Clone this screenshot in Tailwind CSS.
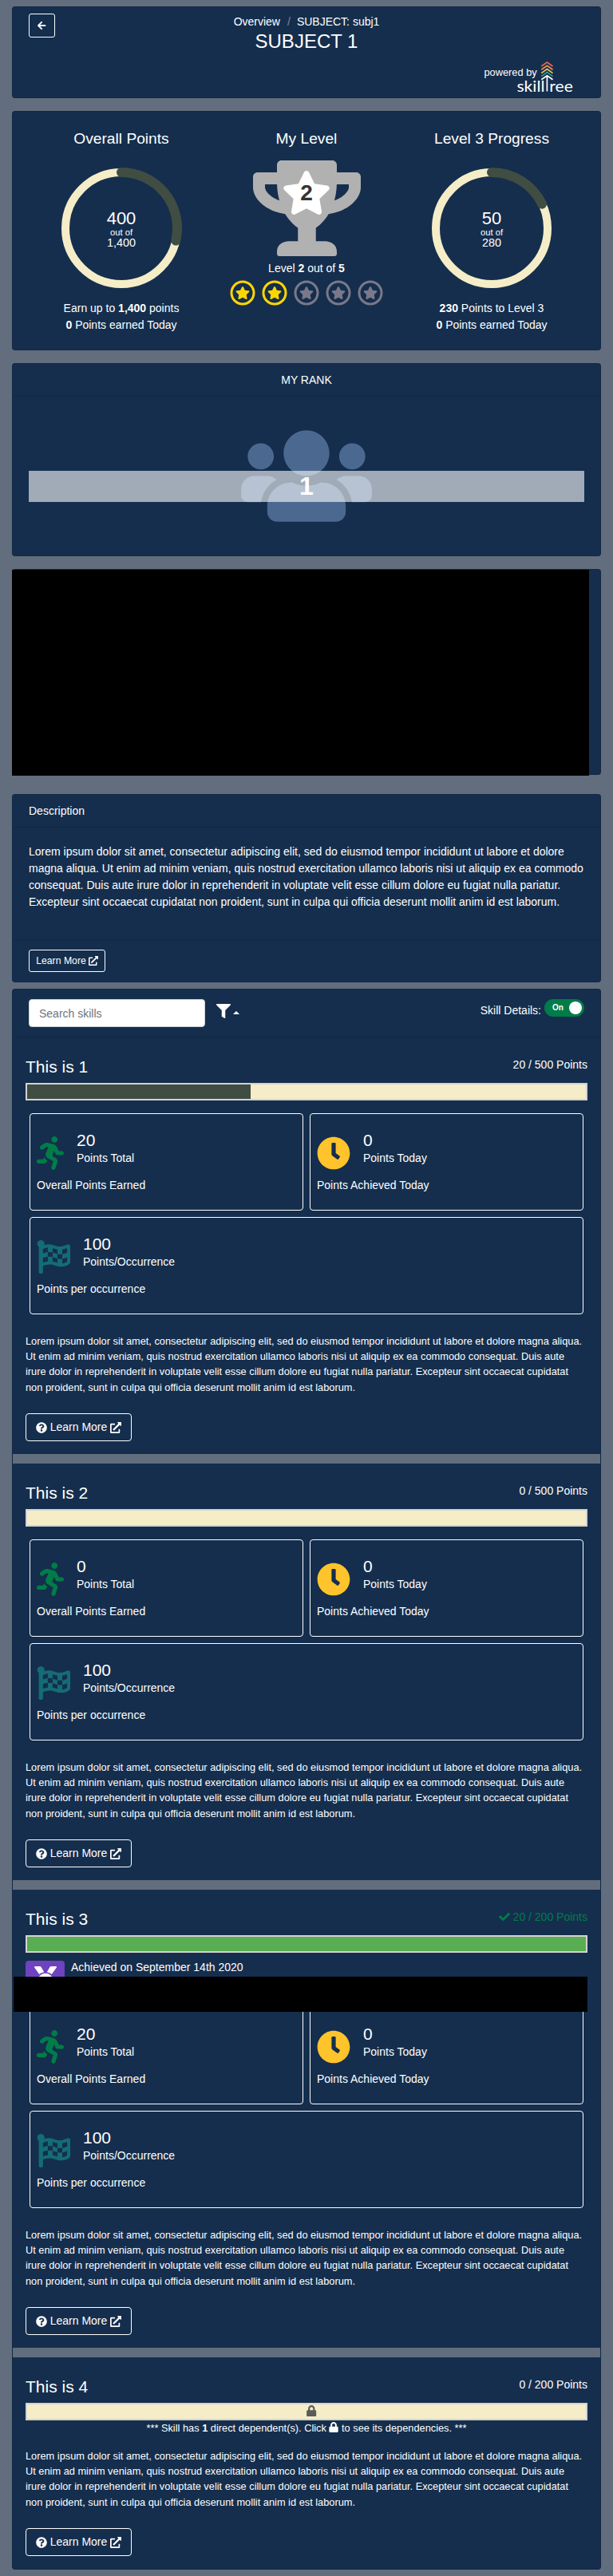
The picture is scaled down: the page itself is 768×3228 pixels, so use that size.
<!DOCTYPE html>
<html lang="en">
<head>
<meta charset="utf-8">
<title>SUBJECT 1</title>
<script src="https://cdn.jsdelivr.net/npm/@tailwindcss/browser@4"></script>
</head>
<body class="bg-[#626d7d] text-white text-[14px] leading-[21px] font-['Liberation_Sans',Arial,sans-serif]">
<svg class="hidden" xmlns="http://www.w3.org/2000/svg">
  <symbol id="arrow" viewBox="0 0 448 512"><path d="M257.5 445.1l-22.2 22.2c-9.4 9.4-24.6 9.4-33.9 0L7 273c-9.4-9.4-9.4-24.6 0-33.9L201.4 44.7c9.4-9.4 24.6-9.4 33.9 0l22.2 22.2c9.5 9.5 9.3 25-.4 34.3L136.6 216H424c13.3 0 24 10.7 24 24v32c0 13.3-10.7 24-24 24H136.6l120.5 114.8c9.8 9.3 10 24.8.4 34.3z"/></symbol>
  <symbol id="trophy" viewBox="0 0 576 512"><path d="M552 64H448V24c0-13.3-10.7-24-24-24H152c-13.3 0-24 10.7-24 24v40H24C10.7 64 0 74.7 0 88v56c0 35.7 22.5 72.4 61.9 100.7 31.5 22.7 69.8 37.1 110 41.7C203.3 338.5 240 360 240 360v72h-48c-35.3 0-64 20.7-64 56v12c0 6.6 5.4 12 12 12h296c6.6 0 12-5.4 12-12v-12c0-35.3-28.7-56-64-56h-48v-72s36.7-21.5 68.1-73.6c40.3-4.6 78.6-19 110-41.7 39.3-28.3 61.9-65 61.9-100.7V88c0-13.3-10.7-24-24-24zM99.3 192.8C74.9 175.2 64 155.6 64 144v-16h64.2c1 32.6 5.8 61.2 12.8 86.2-15.1-5.2-29.2-12.4-41.7-21.4zM512 144c0 16.1-17.7 36.1-35.3 48.8-12.5 9-26.7 16.2-41.8 21.4 7-25 11.8-53.6 12.8-86.2H512v16z"/></symbol>
  <symbol id="star" viewBox="0 0 576 512"><path d="M259.3 17.8L194 150.2 47.9 171.5c-26.2 3.8-36.7 36.1-17.7 54.6l105.7 103-25 145.5c-4.5 26.3 23.2 46 46.4 33.7L288 439.6l130.7 68.7c23.2 12.2 50.9-7.4 46.4-33.7l-25-145.5 105.7-103c19-18.5 8.5-50.8-17.7-54.6L382 150.2 316.7 17.8c-11.7-23.6-45.6-23.9-57.4 0z"/></symbol>
  <symbol id="badge" viewBox="0 0 32 32"><circle cx="16" cy="16" r="14" fill="none" stroke="currentColor" stroke-width="3"/><use href="#star" x="7" y="8" width="18" height="16"/></symbol>
  <symbol id="users" viewBox="0 0 640 512"><path d="M96 224c35.3 0 64-28.7 64-64s-28.7-64-64-64-64 28.7-64 64 28.7 64 64 64zm448 0c35.3 0 64-28.7 64-64s-28.7-64-64-64-64 28.7-64 64 28.7 64 64 64zm32 32h-64c-17.6 0-33.5 7.1-45.1 18.6 40.3 22.1 68.9 62 75.1 109.4h66c17.7 0 32-14.3 32-32v-32c0-35.3-28.7-64-64-64zm-256 0c61.9 0 112-50.1 112-112S381.9 32 320 32 208 82.1 208 144s50.1 112 112 112zm76.8 32h-8.3c-20.8 10-43.9 16-68.5 16s-47.6-6-68.5-16h-8.3C179.6 288 128 339.6 128 403.2V432c0 26.5 21.5 48 48 48h288c26.5 0 48-21.5 48-48v-28.8c0-63.6-51.6-115.2-115.2-115.2zm-223.7-13.4C161.5 263.1 145.6 256 128 256H64c-35.3 0-64 28.7-64 64v32c0 17.7 14.3 32 32 32h65.9c6.3-47.4 34.9-87.3 75.2-109.4z"/></symbol>
  <symbol id="link" viewBox="0 0 512 512"><path d="M432,320H400a16,16,0,0,0-16,16V448H64V128H208a16,16,0,0,0,16-16V80a16,16,0,0,0-16-16H48A48,48,0,0,0,0,112V464a48,48,0,0,0,48,48H400a48,48,0,0,0,48-48V336A16,16,0,0,0,432,320ZM488,0h-128c-21.37,0-32.05,25.91-17,41l35.73,35.73L135,320.37a24,24,0,0,0,0,34L157.67,377a24,24,0,0,0,34,0L435.28,133.32,471,169c15,15,41,4.5,41-17V24A24,24,0,0,0,488,0Z"/></symbol>
  <symbol id="question" viewBox="0 0 512 512"><path d="M504 256c0 136.997-111.043 248-248 248S8 392.997 8 256C8 119.083 119.043 8 256 8s248 111.083 248 248zM262.655 90c-54.497 0-89.255 22.957-116.549 63.758-3.536 5.286-2.353 12.415 2.715 16.258l34.699 26.31c5.205 3.947 12.621 3.008 16.665-2.122 17.864-22.658 30.113-35.797 57.303-35.797 20.429 0 45.698 13.148 45.698 32.958 0 14.976-12.363 22.667-32.534 33.976C247.128 238.528 216 254.941 216 296v4c0 6.627 5.373 12 12 12h56c6.627 0 12-5.373 12-12v-1.333c0-28.462 83.186-29.647 83.186-106.667 0-58.002-60.165-102-116.531-102zM256 338c-25.365 0-46 20.635-46 46 0 25.364 20.635 46 46 46s46-20.636 46-46c0-25.365-20.635-46-46-46z"/></symbol>
  <symbol id="filter" viewBox="0 0 512 512"><path d="M487.976 0H24.028C2.71 0-8.047 25.866 7.058 40.971L192 225.941V432c0 7.831 3.821 15.17 10.237 19.662l80 55.98C298.02 518.69 320 507.493 320 487.98V225.941l184.947-184.97C520.021 25.896 509.338 0 487.976 0z"/></symbol>
  <symbol id="run" viewBox="0 0 416 512"><path d="M272 96c26.51 0 48-21.49 48-48S298.51 0 272 0s-48 21.49-48 48 21.49 48 48 48zM113.69 317.47l-14.8 34.52H32c-17.67 0-32 14.33-32 32s14.33 32 32 32h77.45c19.25 0 36.58-11.44 44.11-29.09l8.79-20.52-10.67-6.3c-17.32-10.23-30.06-25.37-37.99-42.61zM384 223.99h-44.03l-26.06-53.25c-12.5-25.55-35.45-44.23-61.78-50.94l-71.08-21.14c-28.3-6.8-57.77-.55-80.84 17.14l-39.67 30.41c-14.03 10.75-16.69 30.83-5.94 44.86s30.84 16.69 44.86 5.94l39.69-30.41c7.67-5.89 17.44-8 25.27-6.14l14.7 4.37-37.46 87.39c-12.62 29.48-1.31 64.01 26.3 80.31l84.98 50.17-27.47 87.73c-5.28 16.86 4.11 34.82 20.97 40.09 3.19 1 6.41 1.48 9.58 1.48 13.61 0 26.23-8.77 30.52-22.45l31.64-101.06c5.91-20.77-2.89-43.08-21.64-54.39l-61.24-36.14 31.31-78.28 20.27 41.43c8 16.34 24.92 26.89 43.11 26.89H384c17.67 0 32-14.33 32-32s-14.33-31.99-32-31.99z"/></symbol>
  <symbol id="clock" viewBox="0 0 512 512"><path d="M256,8C119,8,8,119,8,256S119,504,256,504,504,393,504,256,393,8,256,8Zm92.49,313h0l-20,25a16,16,0,0,1-22.49,2.5h0l-67-49.72a40,40,0,0,1-15-31.23V112a16,16,0,0,1,16-16h32a16,16,0,0,1,16,16V256l58,42.5A16,16,0,0,1,348.49,321Z"/></symbol>
  <symbol id="flag" viewBox="0 0 512 512"><path d="M243.2 189.9V258c26.1 5.9 49.3 15.6 73.6 22.3v-68.2c-26-5.8-49.4-15.5-73.6-22.2zm223.3-123c-34.3 15.9-76.5 31.9-117 31.9C296 98.8 251.7 64 184.3 64c-25 0-47.3 4.4-68 12 2.8-7.3 4.1-15.2 3.6-23.6C118.1 24 94.8 1.2 66.3 0 34.3-1.3 8 24.3 8 56c0 19 9.5 35.8 24 45.9V488c0 13.3 10.7 24 24 24h16c13.3 0 24-10.7 24-24v-94.4c28.3-12.1 63.6-22.1 114.4-22.1 53.6 0 97.8 34.8 165.2 34.8 48.2 0 86.7-16.3 122.5-40.9 8.7-6 13.8-15.8 13.8-26.4V95.9c.1-23.3-24.2-38.8-45.4-29zM169.6 325.5c-25.8 2.7-50 8.2-73.6 16.6v-70.5c26.2-9.3 47.5-15 73.6-17.4v71.3zM464 191c-23.6 9.8-46.3 19.5-73.6 23.9V286c24.8-3.4 51.4-11.8 73.6-26v70.5c-25.1 16.1-48.5 24.7-73.6 27.1V286c-27 3.7-47.9 1.5-73.6-5.6v67.4c-23.9-7.4-47.3-16.7-73.6-21.3V258c-19.7-4.4-40.8-6.8-73.6-3.8v-70c-22.4 3.1-44.6 10.2-73.6 20.9v-70.5c33.2-12.2 50.1-19.8 73.6-22v71.6c27-3.7 48.4-1.3 73.6 5.7v-67.4c23.7 7.4 47.2 16.7 73.6 21.3v68.4c23.7 5.3 47.6 6.9 73.6 2.7V143c27-4.8 52.3-13.6 73.6-22.5z"/></symbol>
  <symbol id="check" viewBox="0 0 512 512"><path d="M173.898 439.404l-166.4-166.4c-9.997-9.997-9.997-26.206 0-36.204l36.203-36.204c9.997-9.998 26.207-9.998 36.204 0L192 312.69 432.095 72.596c9.997-9.997 26.207-9.997 36.204 0l36.203 36.204c9.997 9.997 9.997 26.206 0 36.204l-294.4 294.401c-9.998 9.997-26.207 9.997-36.204-.001z"/></symbol>
  <symbol id="medal" viewBox="0 0 512 512"><path d="M223.75 130.75L154.62 15.54A31.997 31.997 0 0 0 127.18 0H16.03C3.08 0-4.5 14.57 2.92 25.18l111.27 158.96c29.72-27.77 67.52-46.83 109.56-53.39zM495.97 0H384.82c-11.24 0-21.66 5.9-27.44 15.54l-69.13 115.21c42.04 6.56 79.84 25.62 109.56 53.38L509.08 25.18C516.5 14.57 508.92 0 495.97 0zM256 160c-97.2 0-176 78.8-176 176s78.8 176 176 176 176-78.8 176-176-78.8-176-176-176z"/></symbol>
  <symbol id="lock" viewBox="0 0 448 512"><path d="M400 224h-24v-72C376 68.2 307.8 0 224 0S72 68.2 72 152v72H48c-26.5 0-48 21.5-48 48v192c0 26.5 21.5 48 48 48h352c26.5 0 48-21.5 48-48V272c0-26.5-21.5-48-48-48zm-104 0H152v-72c0-39.7 32.3-72 72-72s72 32.3 72 72v72z"/></symbol>
</svg>

<main class="flex flex-col px-[15px] pt-2 pb-2">
  <!-- Title bar -->
  <header class="h-[115px] rounded border border-black/[.125] bg-[#152e4d] px-5 pt-2">
    <div class="grid grid-cols-[33px_1fr_33px]">
      <button class="flex h-[30px] items-center justify-center rounded-[3px] border border-white"><svg class="h-3 w-[10.5px] fill-white"><use href="#arrow"/></svg></button>
      <div class="text-center">
        <div class="flex h-5 justify-center gap-[8px] leading-5"><span>Overview</span><span class="pl-[1px] text-[#7d8894]">/</span><span>SUBJECT: subj1</span></div>
        <h1 class="text-[24px] leading-[29px]">SUBJECT 1</h1>
      </div>
    </div>
    <div class="mt-[9px] flex justify-end pr-[14px]">
      <svg class="overflow-visible" width="112" height="46" viewBox="606 75 112 46" fill="none" stroke-width="1.7">
        <text x="606.5" y="95" font-size="12.8" fill="#fff">powered by</text>
        <path d="M678.3 83 685.4 78 692.5 83" stroke="#e8674b"/>
        <path d="M678.3 87.3 685.4 82.3 692.5 87.3" stroke="#f0924f"/>
        <path d="M678.3 91.6 685.4 86.6 692.5 91.6" stroke="#edc55c"/>
        <path d="M678.3 95.6 685.4 90.6 692.5 95.6" stroke="#2b9d8f"/>
        <path d="M678.3 99.8 685.4 94.8 692.5 99.8M685.4 95V114.6" stroke="#fff"/>
        <text x="647.4" y="114.6" font-size="18.5" textLength="35" lengthAdjust="spacingAndGlyphs" fill="#fff" font-family="Lato, sans-serif">skill</text>
        <text x="688.3" y="114.6" font-size="18.5" textLength="29.5" lengthAdjust="spacingAndGlyphs" fill="#fff" font-family="Lato, sans-serif">ree</text>
      </svg>
    </div>
  </header>

  <!-- Points and level summary -->
  <section class="mt-4 grid h-[300px] grid-cols-3 rounded border border-black/[.125] bg-[#152e4d] px-5 pt-[22px] text-center">
    <div>
      <h2 class="text-[19.2px] leading-6">Overall Points</h2>
      <div class="mt-6 grid h-[152px] place-items-center">
        <svg class="col-start-1 row-start-1" width="152" height="152" fill="none"><circle cx="76" cy="76" r="70" stroke="#f5edc8" stroke-width="10"/><path d="M76 6A70 70 0 0 1 144.24 91.58" stroke="#3f4d43" stroke-width="12" stroke-linecap="round"/></svg>
        <div class="col-start-1 row-start-1 pt-px"><div class="text-[22px] leading-[22px]">400</div><div class="text-[11.2px] leading-[12px]">out of</div><div class="text-[14.4px] leading-[14px]">1,400</div></div>
      </div>
      <div class="mt-[14px]">Earn up to <b>1,400</b> points</div>
      <div><b>0</b> Points earned Today</div>
    </div>
    <div>
      <h2 class="text-[19.2px] leading-6">My Level</h2>
      <div class="mt-[15px] grid h-[120px] justify-items-center">
        <svg class="col-start-1 row-start-1 h-[120px] w-[135px] fill-[#b1b1b1]"><use href="#trophy"/></svg>
        <svg class="col-start-1 row-start-1 mt-[13px] h-[55px] w-[62px] fill-white"><use href="#star"/></svg>
        <b class="col-start-1 row-start-1 mt-[25px] text-[28px] leading-8 text-[#333]">2</b>
      </div>
      <div class="mt-[5px]">Level <b>2</b> out of <b>5</b></div>
      <div class="mt-1 flex justify-center gap-2 fill-current text-[#7b7889]">
        <svg class="size-8 text-[#ffd700]"><use href="#badge"/></svg>
        <svg class="size-8 text-[#ffd700]"><use href="#badge"/></svg>
        <svg class="size-8"><use href="#badge"/></svg>
        <svg class="size-8"><use href="#badge"/></svg>
        <svg class="size-8"><use href="#badge"/></svg>
      </div>
    </div>
    <div>
      <h2 class="text-[19.2px] leading-6">Level 3 Progress</h2>
      <div class="mt-6 grid h-[152px] place-items-center">
        <svg class="col-start-1 row-start-1" width="152" height="152" fill="none"><circle cx="76" cy="76" r="70" stroke="#f5edc8" stroke-width="10"/><path d="M76 6A70 70 0 0 1 139.07 45.63" stroke="#3f4d43" stroke-width="12" stroke-linecap="round"/></svg>
        <div class="col-start-1 row-start-1 pt-px"><div class="text-[22px] leading-[22px]">50</div><div class="text-[11.2px] leading-[12px]">out of</div><div class="text-[14.4px] leading-[14px]">280</div></div>
      </div>
      <div class="mt-[14px]"><b>230</b> Points to Level 3</div>
      <div><b>0</b> Points earned Today</div>
    </div>
  </section>

  <!-- Rank -->
  <section class="mt-4 h-[242px] rounded border border-black/[.125] bg-[#152e4d] text-center">
    <div class="h-[41px] border-b border-black/[.125] pt-[10px]">MY RANK</div>
    <div class="relative mx-5 flex justify-center pt-[34px]">
      <svg class="h-[131px] w-[164px] fill-[#4b6990]"><use href="#users"/></svg>
      <div class="absolute inset-x-0 top-[93px] h-[39px] bg-white/60 text-[32px] leading-[39px] font-bold">1</div>
    </div>
  </section>

  <!-- Point history -->
  <section class="relative mt-4 h-[258px] rounded border border-black/[.125] bg-[#152e4d]">
    <div class="absolute top-0 -left-px h-[258px] w-[723px] bg-black"></div>
  </section>

  <!-- Description -->
  <section class="mt-6 flex h-[236px] flex-col rounded border border-black/[.125] bg-[#152e4d]">
    <div class="h-[41px] border-b border-black/[.125] px-5 pt-[10px]">Description</div>
    <p class="grow px-5 pt-5">Lorem ipsum dolor sit amet, consectetur adipiscing elit, sed do eiusmod tempor incididunt ut labore et dolore<br>magna aliqua. Ut enim ad minim veniam, quis nostrud exercitation ullamco laboris nisi ut aliquip ex ea commodo<br>consequat. Duis aute irure dolor in reprehenderit in voluptate velit esse cillum dolore eu fugiat nulla pariatur.<br>Excepteur sint occaecat cupidatat non proident, sunt in culpa qui officia deserunt mollit anim id est laborum.</p>
    <div class="h-[53px] border-t border-black/[.125] px-5 pt-3">
      <button class="flex h-7 w-24 items-center justify-center gap-[3px] rounded-[3px] border border-white text-[12.25px]">Learn More <svg class="size-3 fill-white"><use href="#link"/></svg></button>
    </div>
  </section>

  <!-- Skills -->
  <section class="mt-2 rounded border border-black/[.125] bg-[#152e4d]">
    <div class="flex h-[60px] items-start border-b border-black/[.125] px-5 pt-3">
      <div class="h-[35px] w-[221px] rounded border border-[#ced4da] bg-white px-3 leading-[34px] text-[#6c757d]">Search skills</div>
      <svg class="mt-[6px] ml-[14px] size-[18px] fill-white"><use href="#filter"/></svg>
      <svg class="mt-[15px] ml-[3px] h-1 w-2 fill-white" viewBox="0 0 8 4"><path d="M0 4 4 0 8 4z"/></svg>
      <div class="mt-[4px] ml-auto">Skill Details:</div>
      <div class="ml-1 flex h-[22px] w-[50px] items-center justify-between rounded-full bg-[#007c49] pr-[3px] pl-[10px] text-[10px] font-bold"><span class="leading-[20px]">On</span><span class="size-4 rounded-full bg-white"></span></div>
    </div>

    <!-- This is 1 -->
    <article class="h-[522px] px-4 pt-6">
      <div class="flex h-[26px] justify-between"><h3 class="text-[21px] leading-[26px]">This is 1</h3><span class="leading-5">20 / 500 Points</span></div>
      <div class="mt-[7px] h-[22px] border-2 border-[#d3d3d3] bg-[#f5edc8]"><div class="h-full bg-[#3f4d43]" style="width:40%"></div></div>
      <div class="mx-[5px] mt-4 grid grid-cols-2 gap-2">
        <div class="h-[122px] rounded border border-white px-2 pt-5">
          <div class="flex gap-4"><svg class="mt-2 h-[42px] w-[34px] fill-[#007c49]"><use href="#run"/></svg><div><div class="text-[21px] leading-[25px]">20</div><div>Points Total</div></div></div>
          <div class="mt-[9px]">Overall Points Earned</div>
        </div>
        <div class="h-[122px] rounded border border-white px-2 pt-5">
          <div class="flex gap-4"><svg class="mt-2 size-[42px] fill-[#ffc42b]"><use href="#clock"/></svg><div><div class="text-[21px] leading-[25px]">0</div><div>Points Today</div></div></div>
          <div class="mt-[9px]">Points Achieved Today</div>
        </div>
        <div class="col-span-2 h-[122px] rounded border border-white px-2 pt-5">
          <div class="flex gap-4"><svg class="mt-2 size-[42px] fill-[#146c75]"><use href="#flag"/></svg><div><div class="text-[21px] leading-[25px]">100</div><div>Points/Occurrence</div></div></div>
          <div class="mt-[9px]">Points per occurrence</div>
        </div>
      </div>
      <p class="mt-6 h-[76px] text-[12.8px] leading-[19.2px] whitespace-nowrap">Lorem ipsum dolor sit amet, consectetur adipiscing elit, sed do eiusmod tempor incididunt ut labore et dolore magna aliqua.<br>Ut enim ad minim veniam, quis nostrud exercitation ullamco laboris nisi ut aliquip ex ea commodo consequat. Duis aute<br>irure dolor in reprehenderit in voluptate velit esse cillum dolore eu fugiat nulla pariatur. Excepteur sint occaecat cupidatat<br>non proident, sunt in culpa qui officia deserunt mollit anim id est laborum.</p>
      <button class="mt-6 flex h-[35px] w-[133px] items-center justify-center gap-1 rounded border border-white"><svg class="size-[14px] fill-white"><use href="#question"/></svg>Learn More<svg class="size-[14px] fill-white"><use href="#link"/></svg></button>
    </article>
    <div class="h-3 bg-[#626d7d]"></div>

    <!-- This is 2 -->
    <article class="h-[522px] px-4 pt-6">
      <div class="flex h-[26px] justify-between"><h3 class="text-[21px] leading-[26px]">This is 2</h3><span class="leading-5">0 / 500 Points</span></div>
      <div class="mt-[7px] h-[22px] border-2 border-[#d3d3d3] bg-[#f5edc8]"></div>
      <div class="mx-[5px] mt-4 grid grid-cols-2 gap-2">
        <div class="h-[122px] rounded border border-white px-2 pt-5">
          <div class="flex gap-4"><svg class="mt-2 h-[42px] w-[34px] fill-[#007c49]"><use href="#run"/></svg><div><div class="text-[21px] leading-[25px]">0</div><div>Points Total</div></div></div>
          <div class="mt-[9px]">Overall Points Earned</div>
        </div>
        <div class="h-[122px] rounded border border-white px-2 pt-5">
          <div class="flex gap-4"><svg class="mt-2 size-[42px] fill-[#ffc42b]"><use href="#clock"/></svg><div><div class="text-[21px] leading-[25px]">0</div><div>Points Today</div></div></div>
          <div class="mt-[9px]">Points Achieved Today</div>
        </div>
        <div class="col-span-2 h-[122px] rounded border border-white px-2 pt-5">
          <div class="flex gap-4"><svg class="mt-2 size-[42px] fill-[#146c75]"><use href="#flag"/></svg><div><div class="text-[21px] leading-[25px]">100</div><div>Points/Occurrence</div></div></div>
          <div class="mt-[9px]">Points per occurrence</div>
        </div>
      </div>
      <p class="mt-6 h-[76px] text-[12.8px] leading-[19.2px] whitespace-nowrap">Lorem ipsum dolor sit amet, consectetur adipiscing elit, sed do eiusmod tempor incididunt ut labore et dolore magna aliqua.<br>Ut enim ad minim veniam, quis nostrud exercitation ullamco laboris nisi ut aliquip ex ea commodo consequat. Duis aute<br>irure dolor in reprehenderit in voluptate velit esse cillum dolore eu fugiat nulla pariatur. Excepteur sint occaecat cupidatat<br>non proident, sunt in culpa qui officia deserunt mollit anim id est laborum.</p>
      <button class="mt-6 flex h-[35px] w-[133px] items-center justify-center gap-1 rounded border border-white"><svg class="size-[14px] fill-white"><use href="#question"/></svg>Learn More<svg class="size-[14px] fill-white"><use href="#link"/></svg></button>
    </article>
    <div class="h-3 bg-[#626d7d]"></div>

    <!-- This is 3 -->
    <article class="relative h-[574px] px-4 pt-6">
      <div class="flex h-[26px] justify-between"><h3 class="text-[21px] leading-[26px]">This is 3</h3><span class="flex gap-1 leading-5 text-[#007c49]"><svg class="mt-[3px] size-[14px] fill-current"><use href="#check"/></svg>20 / 200 Points</span></div>
      <div class="mt-[7px] h-[22px] border-2 border-[#d3d3d3] bg-[#59ad52]"></div>
      <div class="mt-[10px] flex h-[42px] gap-2">
        <div class="flex h-[42px] w-[49px] justify-center rounded bg-[#6f42c1] pt-[7px]"><svg class="size-7 fill-white"><use href="#medal"/></svg></div>
        <div class="leading-[17px]">Achieved on September 14th 2020</div>
      </div>
      <div class="absolute top-[109px] right-4 left-px h-11 bg-black"></div>
      <div class="mx-[5px] mt-4 grid grid-cols-2 gap-2">
        <div class="h-[122px] rounded border border-white px-2 pt-5">
          <div class="flex gap-4"><svg class="mt-2 h-[42px] w-[34px] fill-[#007c49]"><use href="#run"/></svg><div><div class="text-[21px] leading-[25px]">20</div><div>Points Total</div></div></div>
          <div class="mt-[9px]">Overall Points Earned</div>
        </div>
        <div class="h-[122px] rounded border border-white px-2 pt-5">
          <div class="flex gap-4"><svg class="mt-2 size-[42px] fill-[#ffc42b]"><use href="#clock"/></svg><div><div class="text-[21px] leading-[25px]">0</div><div>Points Today</div></div></div>
          <div class="mt-[9px]">Points Achieved Today</div>
        </div>
        <div class="col-span-2 h-[122px] rounded border border-white px-2 pt-5">
          <div class="flex gap-4"><svg class="mt-2 size-[42px] fill-[#146c75]"><use href="#flag"/></svg><div><div class="text-[21px] leading-[25px]">100</div><div>Points/Occurrence</div></div></div>
          <div class="mt-[9px]">Points per occurrence</div>
        </div>
      </div>
      <p class="mt-6 h-[76px] text-[12.8px] leading-[19.2px] whitespace-nowrap">Lorem ipsum dolor sit amet, consectetur adipiscing elit, sed do eiusmod tempor incididunt ut labore et dolore magna aliqua.<br>Ut enim ad minim veniam, quis nostrud exercitation ullamco laboris nisi ut aliquip ex ea commodo consequat. Duis aute<br>irure dolor in reprehenderit in voluptate velit esse cillum dolore eu fugiat nulla pariatur. Excepteur sint occaecat cupidatat<br>non proident, sunt in culpa qui officia deserunt mollit anim id est laborum.</p>
      <button class="mt-6 flex h-[35px] w-[133px] items-center justify-center gap-1 rounded border border-white"><svg class="size-[14px] fill-white"><use href="#question"/></svg>Learn More<svg class="size-[14px] fill-white"><use href="#link"/></svg></button>
    </article>
    <div class="h-3 bg-[#626d7d]"></div>

    <!-- This is 4 -->
    <article class="h-[265px] px-4 pt-6">
      <div class="flex h-[26px] justify-between"><h3 class="text-[21px] leading-[26px]">This is 4</h3><span class="leading-5">0 / 200 Points</span></div>
      <div class="mt-[7px] flex h-[22px] justify-center border-2 border-[#d3d3d3] bg-[#f5edc8] pt-px pl-[13px]"><svg class="h-[14px] w-[12.5px] fill-[#5a5a5a]"><use href="#lock"/></svg></div>
      <div class="flex h-[19px] items-center justify-center text-[12.8px] leading-[20px] whitespace-pre">*** Skill has <b>1</b> direct dependent(s). Click <svg class="mb-[2px] h-[13px] w-[12px] fill-white"><use href="#lock"/></svg> to see its dependencies. ***</div>
      <p class="mt-4 h-[76px] text-[12.8px] leading-[19.2px] whitespace-nowrap">Lorem ipsum dolor sit amet, consectetur adipiscing elit, sed do eiusmod tempor incididunt ut labore et dolore magna aliqua.<br>Ut enim ad minim veniam, quis nostrud exercitation ullamco laboris nisi ut aliquip ex ea commodo consequat. Duis aute<br>irure dolor in reprehenderit in voluptate velit esse cillum dolore eu fugiat nulla pariatur. Excepteur sint occaecat cupidatat<br>non proident, sunt in culpa qui officia deserunt mollit anim id est laborum.</p>
      <button class="mt-6 flex h-[35px] w-[133px] items-center justify-center gap-1 rounded border border-white"><svg class="size-[14px] fill-white"><use href="#question"/></svg>Learn More<svg class="size-[14px] fill-white"><use href="#link"/></svg></button>
    </article>
  </section>
</main>
</body>
</html>
